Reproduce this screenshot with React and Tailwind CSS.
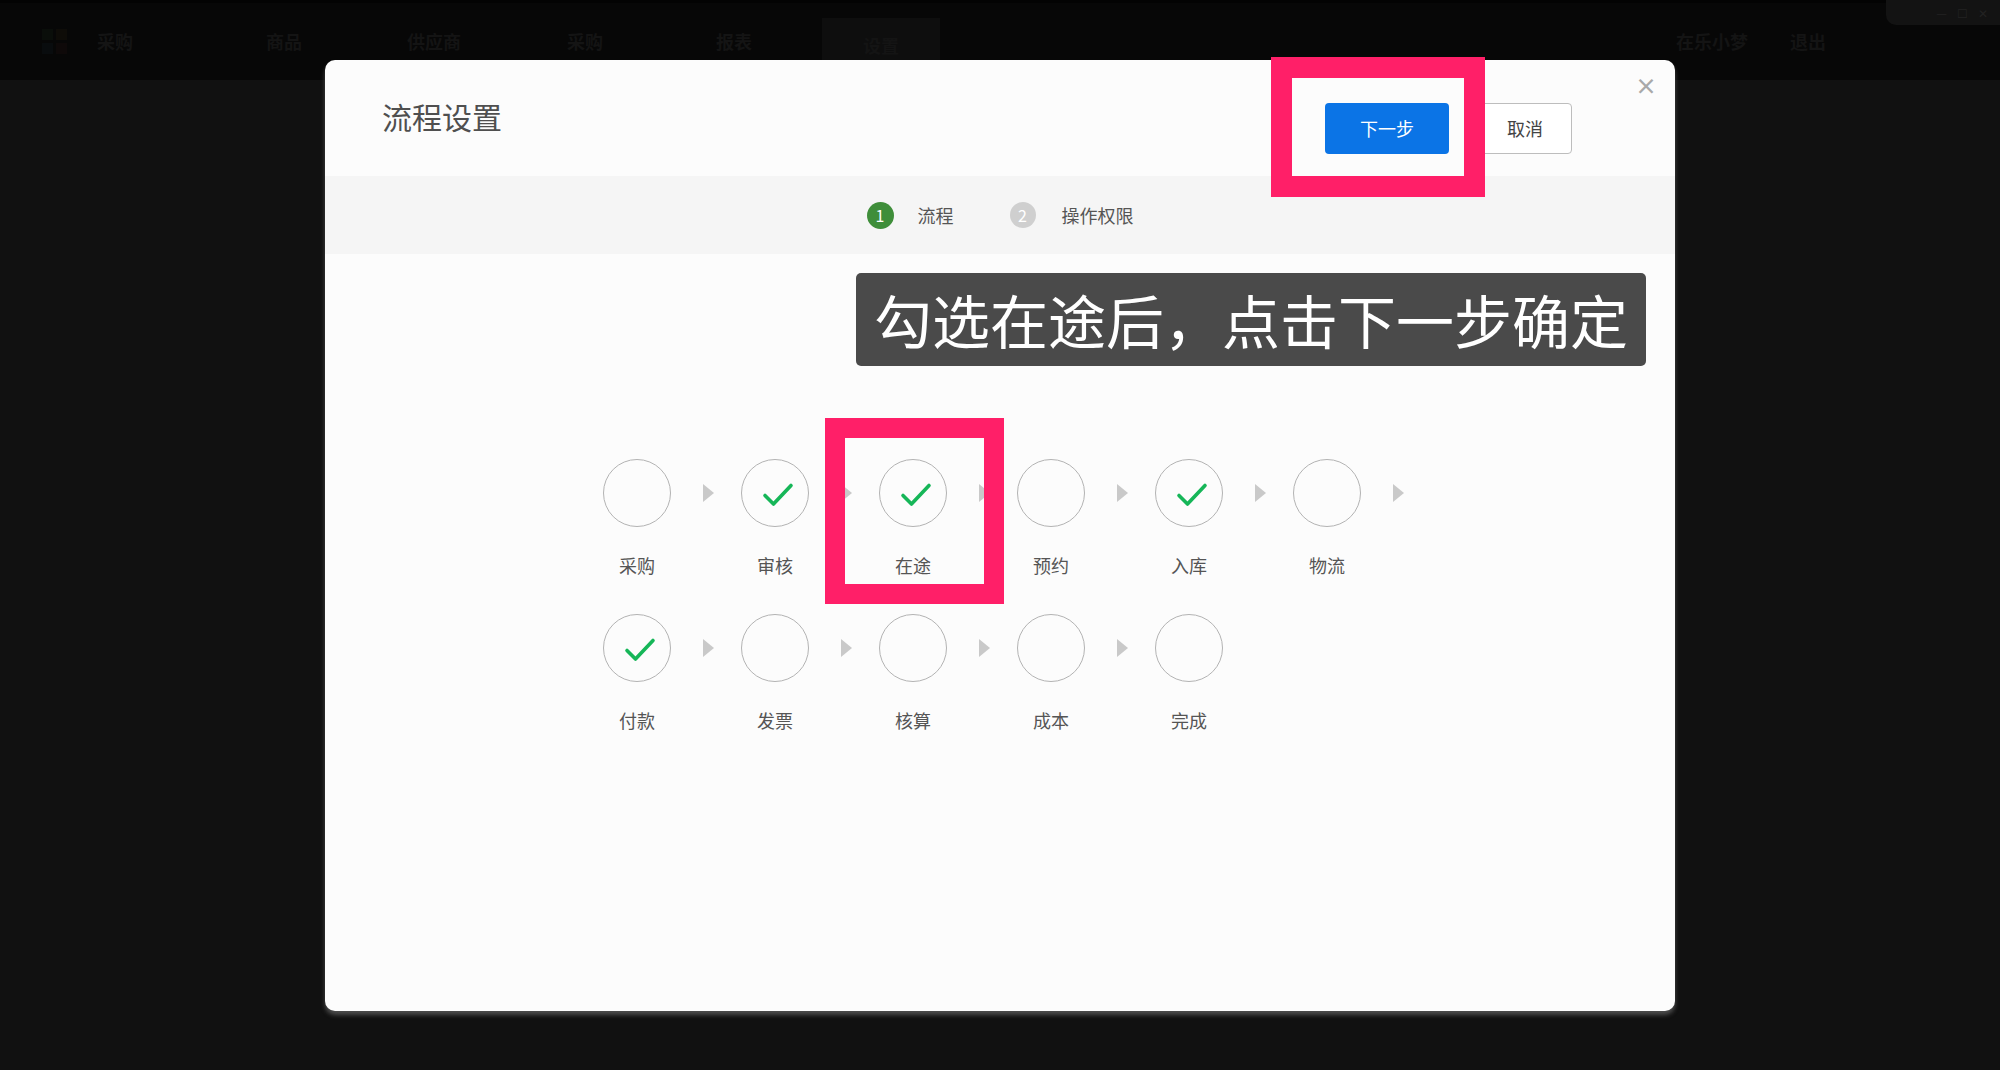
import React from "react";

const navItems = [
  { label: "采购", x: "ml-[30px]" },
  { label: "商品", x: "ml-[133px]" },
  { label: "供应商", x: "ml-[105px]" },
  { label: "采购", x: "ml-[106px]" },
  { label: "报表", x: "ml-[113px]" },
];

const rowOne = [
  { label: "采购", done: false },
  { label: "审核", done: true },
  { label: "在途", done: true },
  { label: "预约", done: false },
  { label: "入库", done: true },
  { label: "物流", done: false },
];

const rowTwo = [
  { label: "付款", done: true },
  { label: "发票", done: false },
  { label: "核算", done: false },
  { label: "成本", done: false },
  { label: "完成", done: false },
];

const Check = () => (
  <svg width="32" height="26" viewBox="0 0 32 26" className="ml-[5px] mt-[3px]">
    <path d="M3 13.5 L11.5 22 L29 3.5" fill="none" stroke="#16b658" strokeWidth="3.6" strokeLinecap="round" strokeLinejoin="round" />
  </svg>
);

const Arrow = () => (
  <div className="w-[70px] h-[68px] flex items-center">
    <div className="ml-[32px] w-0 h-0 border-y-[9px] border-y-transparent border-l-[11px] border-l-[#c9c9c9]" />
  </div>
);

const Node = ({ label, done, arrow }) => (
  <div className="flex flex-col">
    <div className="flex">
      <div className="w-[68px] h-[68px] rounded-full border-[1.5px] border-[#b3b3b3] flex items-center justify-center">
        {done && <Check />}
      </div>
      {arrow ? <Arrow /> : <div className="w-[70px]" />}
    </div>
    <div className="w-[68px] mt-[26px] text-center text-[18px] leading-[24px] text-[#555]">{label}</div>
  </div>
);

const App = () => {
  return (
    <div
      className="relative w-[2000px] h-[1070px] bg-[#111111] overflow-hidden"
      style={{ fontFamily: '"Noto Sans CJK SC", "Noto Sans", sans-serif' }}
    >
      {/* top bar behind the dialog */}
      <div className="h-[80px] bg-[#070707] border-t-[3px] border-[#030303] flex items-center text-[18px] text-[#141414] font-bold">
        <div className="ml-[42px] w-[25px] h-[25px] grid grid-cols-2 gap-[3px] opacity-15">
          <div className="bg-[#1f3a1f]" />
          <div className="bg-[#3a2a10]" />
          <div className="bg-[#1a2a3a]" />
          <div className="bg-[#3a1a1a]" />
        </div>
        {navItems.map((n, i) => (
          <span key={i} className={n.x}>{n.label}</span>
        ))}
        <div className="ml-[70px] self-start mt-[15px] w-[118px] h-[62px] bg-[#0e0e0e] flex justify-center pt-[14px]">设置</div>
        <span className="ml-auto">在乐小梦</span>
        <span className="ml-[42px] mr-[174px]">退出</span>
      </div>
      <div className="absolute right-0 top-0 w-[114px] h-[25px] rounded-bl-[10px] bg-[#131313] flex items-center justify-end gap-[10px] pr-[12px] text-[12px] text-[#222]">
        <span>—</span>
        <span>☐</span>
        <span>✕</span>
      </div>

      {/* dialog */}
      <div className="absolute left-[325px] top-[60px] w-[1350px] h-[951px] rounded-[10px] bg-[#fcfcfc] shadow-[0_4px_4px_rgba(90,90,90,0.8)]">
        <div className="h-[116px] flex items-start">
          <div className="ml-[57px] mt-[36px] text-[30px] leading-[40px] text-[#4f4f4f]">流程设置</div>
          <div className="ml-auto mt-[43px] flex gap-[29px]">
            <button className="w-[124px] h-[51px] rounded-[4px] bg-[#0b74e6] text-white text-[18px]">下一步</button>
            <button className="w-[94px] h-[51px] rounded-[4px] border border-[#bdbdbd] bg-white text-[#444] text-[18px]">取消</button>
          </div>
          <div className="ml-[63px] mr-[18px] mt-[17px] text-[22px] leading-[14px] text-[#a9a9a9] font-bold">×</div>
        </div>

        <div className="h-[78px] bg-[#f5f5f5] flex items-center justify-center text-[18px] text-[#555]">
          <div className="w-[27px] h-[27px] rounded-full bg-[#3f8e3a] text-white text-[16px] flex items-center justify-center">1</div>
          <span className="ml-[24px]">流程</span>
          <div className="ml-[56px] w-[26px] h-[26px] rounded-full bg-[#cfcfcf] text-white text-[16px] flex items-center justify-center">2</div>
          <span className="ml-[26px]">操作权限</span>
        </div>

        <div className="flex justify-end pr-[29px] pt-[19px]">
          <div className="h-[93px] px-[18px] rounded-[5px] bg-[#4a4a4a] text-white text-[58px] leading-[93px]">
            勾选在途后，点击下一步确定
          </div>
        </div>

        <div className="mt-[93px] ml-[278px] flex flex-col gap-[37px]">
          <div className="flex">
            {rowOne.map((s, i) => (
              <Node key={i} label={s.label} done={s.done} arrow />
            ))}
          </div>
          <div className="flex">
            {rowTwo.map((s, i) => (
              <Node key={i} label={s.label} done={s.done} arrow={i < rowTwo.length - 1} />
            ))}
          </div>
        </div>

        {/* annotation boxes */}
        <div className="absolute left-[946px] top-[-3px] w-[214px] h-[140px] border-[21px] border-[#ff1f68]" />
        <div className="absolute left-[500px] top-[358px] w-[179px] h-[186px] border-[20px] border-[#ff1f68]" />
      </div>
    </div>
  );
};

export default App;
